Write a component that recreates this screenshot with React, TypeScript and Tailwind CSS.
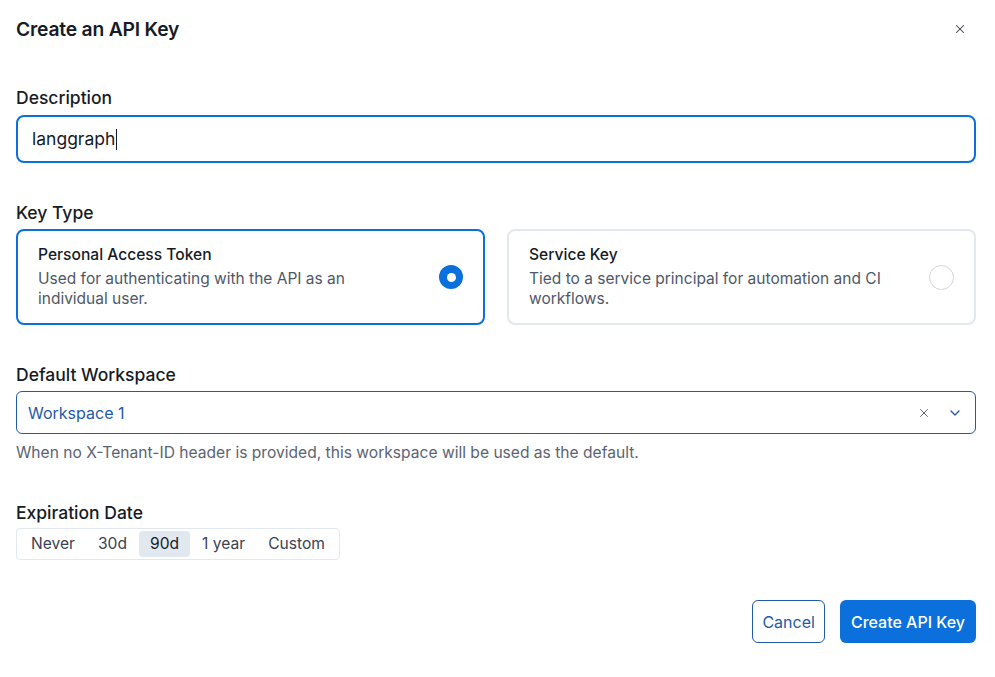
import { X, ChevronDown } from 'lucide-react'
import { clsx } from 'clsx'

const EXPIRY = ['Never', '30d', '90d', '1 year', 'Custom']

function KeyTypeCard({ title, desc, selected }: { title: string; desc: string; selected?: boolean }) {
  return (
    <div
      className={clsx(
        'flex flex-1 items-center justify-between rounded-lg border-2 bg-white pl-[20px] pr-[20px] h-[96px]',
        selected ? 'border-[#0b6fdc]' : 'border-[#e3e8f0]'
      )}
    >
      <div className="max-w-[370px]">
        <p className="text-[15.6px] font-medium leading-5 text-[#161b26]">{title}</p>
        <p className="mt-[4px] text-[15.5px] leading-5 text-[#4e5868]">{desc}</p>
      </div>
      {selected ? (
        <div className="flex h-[24px] w-[24px] items-center justify-center rounded-full bg-[#0b6fdc]">
          <div className="h-[9px] w-[9px] rounded-full bg-white" />
        </div>
      ) : (
        <div className="h-[25px] w-[25px] rounded-full border border-[#cfd6e1] bg-white" />
      )}
    </div>
  )
}

export default function App() {
  return (
    <div className="min-h-screen w-[995px] bg-white pl-4 pr-[19px] font-['Inter',sans-serif] text-[#161b26]">
      {/* Header */}
      <div className="flex h-[58px] items-center justify-between">
        <h1 className="text-[19.3px] font-semibold tracking-[-0.2px]">Create an API Key</h1>
        <X className="mr-[9px] h-[14px] w-[14px] text-[#3b4252]" strokeWidth={1.8} />
      </div>

      {/* Description */}
      <div className="mt-[29px]">
        <label className="block text-[17.5px] font-medium leading-[22px]">Description</label>
        <div className="mt-[6px] flex h-[48px] items-center rounded-lg border-2 border-[#0b6fdc] px-[14px]">
          <span className="text-[17.5px] text-[#161b26]">langgraph</span>
          <span className="ml-[1px] h-[21px] w-px bg-[#161b26]" />
        </div>
      </div>

      {/* Key Type */}
      <div className="mt-[39px]">
        <label className="block text-[17.5px] font-medium leading-[22px]">Key Type</label>
        <div className="mt-[5px] flex gap-[22px]">
          <KeyTypeCard
            selected
            title="Personal Access Token"
            desc="Used for authenticating with the API as an individual user."
          />
          <KeyTypeCard
            title="Service Key"
            desc="Tied to a service principal for automation and CI workflows."
          />
        </div>
      </div>

      {/* Default Workspace */}
      <div className="mt-[39px]">
        <label className="block text-[17.5px] font-medium leading-[22px]">Default Workspace</label>
        <div className="mt-[5px] flex h-[43px] items-center justify-between rounded-md border border-[#1f5ba8] pl-[11px] pr-[12px]">
          <span className="text-[16px] text-[#1f5ba8]">Workspace 1</span>
          <div className="flex items-center gap-[16px]">
            <X className="h-[14px] w-[14px] text-[#555d6b]" strokeWidth={1.6} />
            <ChevronDown className="h-[16px] w-[16px] text-[#1f5ba8]" strokeWidth={2} />
          </div>
        </div>
        <p className="mt-[9px] text-[15.6px] leading-5 text-[#5b6472]">
          When no X-Tenant-ID header is provided, this workspace will be used as the default.
        </p>
      </div>

      {/* Expiration Date */}
      <div className="mt-[39px]">
        <label className="block text-[17.5px] font-medium leading-[22px]">Expiration Date</label>
        <div className="mt-[4px] inline-flex h-[32px] items-center gap-[1px] rounded border border-[#e3e8f0] px-[3px]">
          {EXPIRY.map(opt => (
            <span
              key={opt}
              className={clsx(
                'flex h-[26px] items-center rounded-sm px-[11px] text-[15.6px]',
                opt === '90d' ? 'bg-[#e2e8f0] text-[#161b26]' : 'text-[#3a4352]'
              )}
            >
              {opt}
            </span>
          ))}
        </div>
      </div>

      {/* Footer */}
      <div className="mt-[40px] flex justify-end gap-[15px]">
        <button className="h-[43px] rounded-md border border-[#1f5ba8] px-[9px] text-[16px] text-[#1f5ba8]">
          Cancel
        </button>
        <button className="h-[43px] rounded-md bg-[#0b6fdc] px-[11px] text-[16px] font-medium text-white">
          Create API Key
        </button>
      </div>
    </div>
  )
}
